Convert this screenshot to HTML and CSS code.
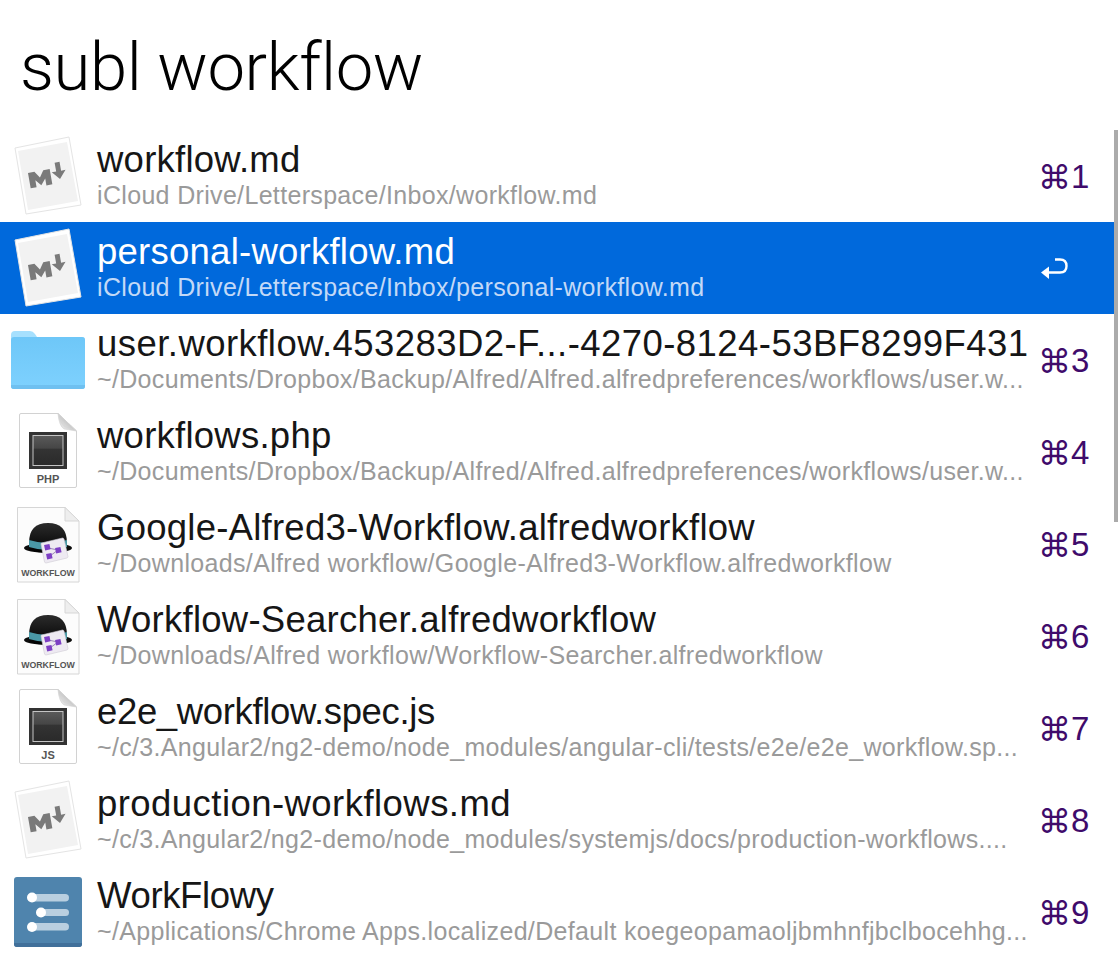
FILE: index.html
```html
<!DOCTYPE html>
<html lang="en">
<head>
<meta charset="utf-8">
<title>subl workflow</title>
<link rel="stylesheet" href="styles.css">
</head>
<body>
<svg class="defs" width="0" height="0" aria-hidden="true">
  <defs>
    <linearGradient id="hatg" x1="0" y1="0" x2="0" y2="1"><stop offset="0" stop-color="#2c2c2c"/><stop offset="1" stop-color="#000"/></linearGradient>
    <linearGradient id="folderg" x1="0" y1="0" x2="0" y2="1"><stop offset="0" stop-color="#6ec7f8"/><stop offset="1" stop-color="#7ed1fe"/></linearGradient>
    <linearGradient id="screeng" x1="0" y1="0" x2="0" y2="1"><stop offset="0" stop-color="#5a5a5a"/><stop offset=".42" stop-color="#464646"/><stop offset=".46" stop-color="#333"/><stop offset="1" stop-color="#2a2a2a"/></linearGradient>
    <linearGradient id="foldg" x1="0" y1="1" x2="1" y2="0"><stop offset="0" stop-color="#fafafa"/><stop offset=".55" stop-color="#c4c4c4"/><stop offset="1" stop-color="#e8e8e8"/></linearGradient>
    <symbol id="i-md" viewBox="0 0 97 92">
      <path d="M15 18 L69 7 L81 75 L26 84 Z" fill="#fff" stroke="#e4e4e4" stroke-width="1"/>
      <path d="M18 21 L67 12 L78 71 L28 80 Z" fill="#f2f2f2"/>
      <g transform="rotate(-10 48 47)" fill="#7a7a7a">
        <path d="M29 55 V39.500 H35.500 L40 46 L44.500 39.500 H51 V55 H45 V48 L40 54 L35 48 V55 Z"/>
        <path d="M57 34 H62 V43 H66.500 L59.500 51 L52.500 43 H57 Z"/>
      </g>
    </symbol>
    <symbol id="i-folder" viewBox="0 0 97 92">
      <path d="M11 21 Q11 17 15 17 H30 Q33 17 35 20 L37 23 H82 Q85 23 85 26 V72 Q85 75 82 75 H14 Q11 75 11 72 Z" fill="#a6e0fe"/>
      <path d="M11 26 Q11 23 14 23 H82 Q85 23 85 26 V72 Q85 75 82 75 H14 Q11 75 11 72 Z" fill="url(#folderg)"/>
      <path d="M11 71 H85 V72 Q85 75 82 75 H14 Q11 75 11 72 Z" fill="#6fc0f0"/>
    </symbol>
    <symbol id="i-doc" viewBox="0 0 97 92">
      <path d="M21 7.500 H58 L76.500 25 V80 Q76.500 81.500 75 81.500 H21 Q19.500 81.500 19.500 80 V9 Q19.500 7.500 21 7.500 Z" fill="#fff" stroke="#d2d2d2" stroke-width="1"/>
      <path d="M58 7.500 Q60 16 64 20 Q69 22 76.500 25 L58 7.500 Z M58 7.500 Q59 20 64 23 Q70 24 76.500 25 Z" fill="url(#foldg)" stroke="#d4d4d4" stroke-width=".6"/>
      <rect x="29" y="26" width="38" height="37" fill="#333"/>
      <rect x="33" y="29.500" width="30" height="30" fill="url(#screeng)" stroke="#c4c4c4" stroke-width="1"/>
    </symbol>
    <symbol id="i-workflow" viewBox="0 0 97 92">
      <path d="M17.500 9.500 H65 L79 23 V84 H17.500 Z" fill="#fcfcfc" stroke="#d6d6d6" stroke-width="1"/>
      <path d="M65 9.500 V23 H79 Z" fill="#eee" stroke="#d6d6d6" stroke-width="1"/>
      <ellipse cx="48" cy="50" rx="24" ry="5" fill="#0c0c0c"/>
      <path d="M29 45 Q29 25 48 25 Q67 25 67 45 L67 52 Q48 58 29 52 Z" fill="url(#hatg)"/>
      <path d="M29 42 Q48 48 67 42 L67 49 Q48 55 29 49 Z" fill="#4a98a6"/>
      <path d="M41.500 45 L62.500 40 Q63.500 40 64 41 L68 58.500 Q68 59.500 67 60 L46 65 Q45 65 44.500 64 L41 46 Q41 45 41.500 45 Z" fill="#eeeaf2" stroke="#cfcbd3" stroke-width=".6"/>
      <path d="M48 50 L58 52 L50 58" fill="none" stroke="#9a86b8" stroke-width="1"/>
      <rect x="44.500" y="46.500" width="5.500" height="5.500" fill="#7d3fc4" transform="rotate(-12 47 49)"/>
      <rect x="55.500" y="49.500" width="5.500" height="5.500" fill="#7d3fc4" transform="rotate(-12 58 52)"/>
      <rect x="46.500" y="55.500" width="5.500" height="5.500" fill="#7d3fc4" transform="rotate(-12 49 58)"/>
    </symbol>
    <symbol id="i-workflowy" viewBox="0 0 97 92">
      <rect x="14" y="11" width="68" height="70" rx="3" fill="#4f84ad"/>
      <path d="M14 77 V78 Q14 81 17 81 H79 Q82 81 82 78 V77 Z" fill="#41709a"/>
      <rect x="30" y="28" width="39" height="7.500" rx="3.750" fill="#b9cfe0"/>
      <rect x="39" y="43" width="30" height="7" rx="3.500" fill="#b9cfe0"/>
      <rect x="30" y="57" width="39" height="7.500" rx="3.750" fill="#b9cfe0"/>
      <circle cx="32" cy="31.500" r="5" fill="#fff"/>
      <circle cx="41" cy="46.500" r="5" fill="#fff"/>
      <circle cx="32" cy="61" r="5" fill="#fff"/>
    </symbol>
  </defs>
</svg>
<main class="panel">
  <h1 class="query">subl workflow</h1>
  <ul class="results">
    <li class="row">
      <svg class="icon" viewBox="0 0 97 92"><use href="#i-md"/></svg>
      <div class="text"><div class="name">workflow.md</div><div class="path">iCloud Drive/Letterspace/Inbox/workflow.md</div></div>
      <div class="key"><span class="cmd">⌘</span>1</div>
    </li>
    <li class="row selected">
      <svg class="icon" viewBox="0 0 97 92"><use href="#i-md"/></svg>
      <div class="text"><div class="name">personal-workflow.md</div><div class="path">iCloud Drive/Letterspace/Inbox/personal-workflow.md</div></div>
      <div class="key"><svg class="enter" viewBox="0 0 28 22"><path d="M15 1.500 H20 Q26.500 1.500 26.500 8 Q26.500 14.500 20 14.500 H7" fill="none" stroke="#fff" stroke-width="2.400"/><path d="M1 14.500 L9 8.500 V21 Z" fill="#fff"/></svg></div>
    </li>
    <li class="row">
      <svg class="icon" viewBox="0 0 97 92"><use href="#i-folder"/></svg>
      <div class="text"><div class="name name-wide">user.workflow.453283D2-F...-4270-8124-53BF8299F431</div><div class="path">~/Documents/Dropbox/Backup/Alfred/Alfred.alfredpreferences/workflows/user.w...</div></div>
      <div class="key"><span class="cmd">⌘</span>3</div>
    </li>
    <li class="row">
      <svg class="icon" viewBox="0 0 97 92"><use href="#i-doc"/><text class="doc-label" x="48" y="77">PHP</text></svg>
      <div class="text"><div class="name">workflows.php</div><div class="path">~/Documents/Dropbox/Backup/Alfred/Alfred.alfredpreferences/workflows/user.w...</div></div>
      <div class="key"><span class="cmd">⌘</span>4</div>
    </li>
    <li class="row">
      <svg class="icon" viewBox="0 0 97 92"><use href="#i-workflow"/><text class="wf-label" x="48" y="78">WORKFLOW</text></svg>
      <div class="text"><div class="name">Google-Alfred3-Workflow.alfredworkflow</div><div class="path">~/Downloads/Alfred workflow/Google-Alfred3-Workflow.alfredworkflow</div></div>
      <div class="key"><span class="cmd">⌘</span>5</div>
    </li>
    <li class="row">
      <svg class="icon" viewBox="0 0 97 92"><use href="#i-workflow"/><text class="wf-label" x="48" y="78">WORKFLOW</text></svg>
      <div class="text"><div class="name">Workflow-Searcher.alfredworkflow</div><div class="path">~/Downloads/Alfred workflow/Workflow-Searcher.alfredworkflow</div></div>
      <div class="key"><span class="cmd">⌘</span>6</div>
    </li>
    <li class="row">
      <svg class="icon" viewBox="0 0 97 92"><use href="#i-doc"/><text class="doc-label" x="48" y="77">JS</text></svg>
      <div class="text"><div class="name name-tight">e2e_workflow.spec.js</div><div class="path">~/c/3.Angular2/ng2-demo/node_modules/angular-cli/tests/e2e/e2e_workflow.sp...</div></div>
      <div class="key"><span class="cmd">⌘</span>7</div>
    </li>
    <li class="row">
      <svg class="icon" viewBox="0 0 97 92"><use href="#i-md"/></svg>
      <div class="text"><div class="name name-wide">production-workflows.md</div><div class="path">~/c/3.Angular2/ng2-demo/node_modules/systemjs/docs/production-workflows....</div></div>
      <div class="key"><span class="cmd">⌘</span>8</div>
    </li>
    <li class="row">
      <svg class="icon" viewBox="0 0 97 92"><use href="#i-workflowy"/></svg>
      <div class="text"><div class="name name-tight">WorkFlowy</div><div class="path">~/Applications/Chrome Apps.localized/Default koegeopamaoljbmhnfjbclbocehhg...</div></div>
      <div class="key"><span class="cmd">⌘</span>9</div>
    </li>
  </ul>
  <div class="scrollbar"></div>
</main>
</body>
</html>
```
FILE: styles.css
```css
* { box-sizing: border-box; }
html, body { margin: 0; padding: 0; background: #fff; }
body { font-family: "Liberation Sans", Arial, sans-serif; color: #161616; }
.defs { position: absolute; }
.panel { position: relative; width: 1118px; height: 966px; overflow: hidden; }
.query {
  margin: 0; height: 130px; padding: 25px 0 0 20px;
  font-family: Roboto, "Liberation Sans", sans-serif;
  font-weight: 300; font-size: 67px; letter-spacing: -.4px; line-height: 84px; color: #000;
}
.results { list-style: none; margin: 0; padding: 0; }
.row { display: flex; height: 92px; align-items: stretch; }
.row.selected { background: #0069dc; color: #fff; }
.icon { display: block; flex: 0 0 97px; width: 97px; height: 92px; }
.doc-label, .wf-label {
  font-family: "Liberation Sans", Arial, sans-serif;
  font-weight: 700; fill: #555; text-anchor: middle;
}
.doc-label { font-size: 11px; }
.wf-label { font-size: 8.8px; }
.text { flex: 0 0 933px; width: 933px; min-width: 0; }
.name { height: 46px; padding-top: 7px; font-size: 36.5px; letter-spacing: .25px; line-height: 46px; white-space: nowrap; }
.name-wide { letter-spacing: .45px; }
.name-tight { letter-spacing: -.35px; }
.path { font-size: 25px; letter-spacing: .33px; line-height: 34px; padding-top: 2px; color: #9a9a9a; white-space: nowrap; }
.selected .path { color: #c3d9f7; }
.key { flex: 0 0 auto; display: flex; align-items: center; padding: 2px 0 0 8px; font-size: 33px; color: #3f0b6b; white-space: nowrap; }
.cmd { font-family: "DejaVu Sans", sans-serif; font-size: 33px; }
.enter { width: 28px; height: 22px; margin-left: 2px; }
.scrollbar { position: absolute; right: 0; top: 130px; width: 4px; height: 392px; background: #ababab; }
```
